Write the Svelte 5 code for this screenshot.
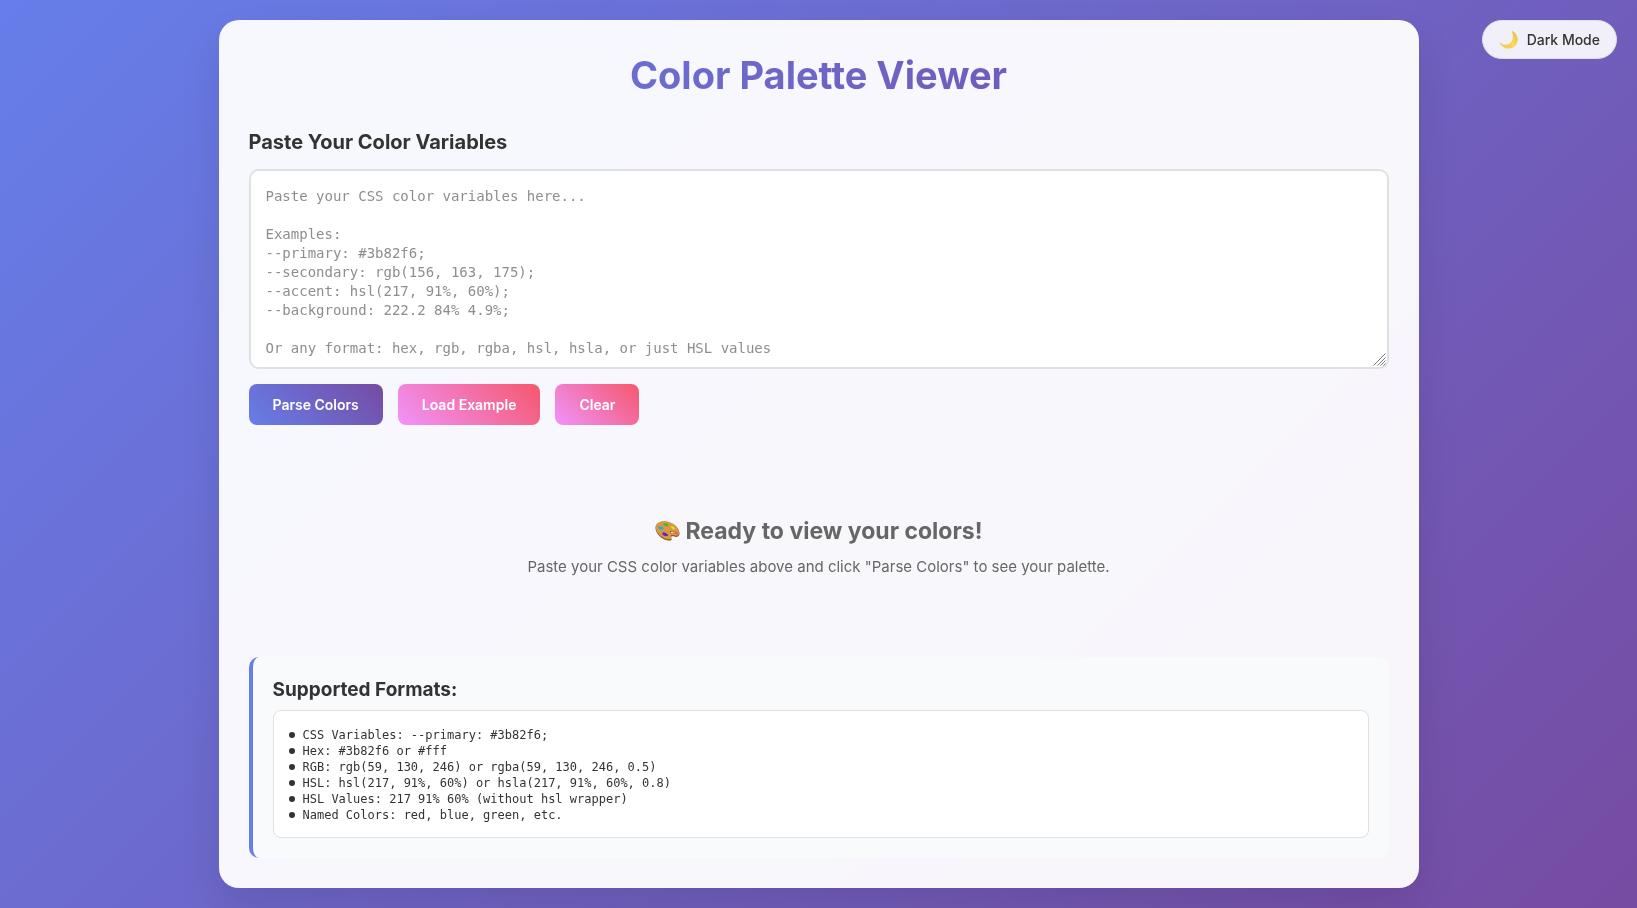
<script lang="ts">
  type Swatch = { name: string; value: string };

  const placeholder = `Paste your CSS color variables here...

Examples:
--primary: #3b82f6;
--secondary: rgb(156, 163, 175);
--accent: hsl(217, 91%, 60%);
--background: 222.2 84% 4.9%;

Or any format: hex, rgb, rgba, hsl, hsla, or just HSL values`;

  const example = `--primary: #3b82f6;
--secondary: rgb(156, 163, 175);
--accent: hsl(217, 91%, 60%);
--background: 222.2 84% 4.9%;`;

  const formats = [
    'CSS Variables: --primary: #3b82f6;',
    'Hex: #3b82f6 or #fff',
    'RGB: rgb(59, 130, 246) or rgba(59, 130, 246, 0.5)',
    'HSL: hsl(217, 91%, 60%) or hsla(217, 91%, 60%, 0.8)',
    'HSL Values: 217 91% 60% (without hsl wrapper)',
    'Named Colors: red, blue, green, etc.'
  ];

  let input = $state('');
  let dark = $state(false);
  let colors = $state<Swatch[]>([]);

  function parseColors() {
    colors = input
      .split(/[;\n]/)
      .map((line) => line.trim())
      .filter(Boolean)
      .map((line) => {
        const [, name, raw] = line.match(/^(?:(--[\w-]+)\s*:)?\s*(.+)$/) ?? [];
        // bare HSL values need the wrapper
        const value = /^[\d.]+\s+[\d.]+%\s+[\d.]+%$/.test(raw) ? `hsl(${raw})` : raw;
        return { name: name ?? raw, value };
      })
      .filter((c) => CSS.supports('color', c.value));
  }

  function loadExample() {
    input = example;
    parseColors();
  }

  function clear() {
    input = '';
    colors = [];
  }
</script>

<div class="page" class:dark>
  <button class="toggle" onclick={() => (dark = !dark)}>
    <svg width="19" height="19" viewBox="0 0 20 20" aria-hidden="true">
      <defs>
        <linearGradient id="moon" x1="0" y1="1" x2="1" y2="0">
          <stop offset="0" stop-color="#f6c544" />
          <stop offset="0.5" stop-color="#fbd75c" />
          <stop offset="1" stop-color="#e9b93c" />
        </linearGradient>
      </defs>
      <path
        d="M13.2.6C17 2.2 19.7 5.8 19.7 10c0 5.400-4.300 9.600-9.700 9.600-4.400 0-8.300-2.900-9.600-7 1.800 2.200 4.300 3.200 6.900 2.900 4.200-.4 7.300-3.900 7.300-8.100 0-2.500-.4-4.500-1.400-6.800z"
        fill="url(#moon)"
      />
    </svg>
    <span>{dark ? 'Light Mode' : 'Dark Mode'}</span>
  </button>

  <main class="container">
    <h1>Color Palette Viewer</h1>

    <section class="input-section">
      <h2><label for="colors">Paste Your Color Variables</label></h2>
      <textarea id="colors" bind:value={input} {placeholder} spellcheck="false"></textarea>
      <div class="buttons">
        <button class="btn" onclick={parseColors}>Parse Colors</button>
        <button class="btn secondary" onclick={loadExample}>Load Example</button>
        <button class="btn secondary" onclick={clear}>Clear</button>
      </div>
    </section>

    {#if colors.length}
      <section class="palette">
        {#each colors as c}
          <div class="swatch">
            <div class="chip" style="background: {c.value}"></div>
            <strong>{c.name}</strong>
            <code>{c.value}</code>
          </div>
        {/each}
      </section>
    {:else}
      <section class="empty">
        <h3>
          <svg width="25" height="20" viewBox="0 0 25 20" aria-hidden="true">
            <path
              d="M1 4.500C2.600.8 8.500-.3 14 1.400c5.800 1.700 10.300 6.300 10.500 10.700.1 2.500-1.300 4-3.300 3.800-1.800-.1-3.400-1.100-4.600-.5-1.300.8.700 2.300-.2 3.500-1 1.300-5.200.7-8.800-1.500C2.500 14.400-.8 8.600 1 4.500z"
              fill="#8a571d"
            />
            <path
              d="M1.200 4C2.900.5 8.500-.5 14 1.100c5.600 1.700 9.900 6 10.100 10.200.1 2.200-1.100 3.600-2.900 3.400-1.900-.2-3.500-1.300-4.900-.5-1.500 1 .4 2.600-.4 3.600-.9 1.100-4.800.5-8.200-1.500C2.700 13.500-.5 8 1.200 4z"
              fill="#d69a43"
            />
            <ellipse cx="16.700" cy="11" rx="1.900" ry="1.200" fill="#7c5124" />
            <ellipse cx="17" cy="11.300" rx="1.400" ry=".8" fill="#f8f8fd" />
            <path d="M8.500 3c1-1.300 4.500-.8 4.700.9.200 1.500-1.700 1.600-2.700.9C9.600 4.300 7.800 4.200 8.500 3z" fill="#48b52b" />
            <path d="M3.500 5.800c.9-1.100 2.300.1 3.600.1 1.400.2 1.800 1.900.5 2.600-1.600.8-5-.9-4.100-2.700z" fill="#1fa8e5" />
            <path d="M7.300 12c.7-1.400 2.700-.8 3.700.2 1 .9 2.700 1.200 2.100 2.300-.8 1.500-6.800.2-5.800-2.500z" fill="#7520c5" />
            <path d="M16 5.600c.7-1.200 3.900.4 3.900 1.900 0 1.300-1.700 1-2.400.3-.7-.6-2.100-1.100-1.500-2.200z" fill="#f3d72f" />
            <path d="M19.700 10.900c.6-1.200 3.300.1 3.500 1.500.1 1.200-1.500 1.300-2.200.7-.7-.5-1.800-1.200-1.300-2.200z" fill="#f25a59" />
          </svg>
          Ready to view your colors!
        </h3>
        <p>Paste your CSS color variables above and click "Parse Colors" to see your palette.</p>
      </section>
    {/if}

    <section class="formats">
      <h4>Supported Formats:</h4>
      <ul>
        {#each formats as format}
          <li>{format}</li>
        {/each}
      </ul>
    </section>
  </main>
</div>

<style>
  :global(body) {
    margin: 0;
  }

  .page {
    --card: rgba(255, 255, 255, 0.95);
    --panel: #f8fafc;
    --field: #fff;
    --line: #e0e0e0;
    --text: #333;
    --muted: #666;
    box-sizing: border-box;
    min-height: 100vh;
    padding: 20px;
    background: linear-gradient(135deg, #667eea 0%, #764ba2 100%);
    color: var(--text);
    font-family: Inter, 'Liberation Sans', sans-serif;
    font-size: 15px;
  }

  .page.dark {
    --card: rgba(30, 30, 46, 0.95);
    --panel: #262638;
    --field: #1b1b2a;
    --line: #44445a;
    --text: #eee;
    --muted: #aaa;
  }

  h1, h2, h3, h4, p, ul {
    margin: 0;
    padding: 0;
  }

  button {
    font-family: inherit;
    cursor: pointer;
  }

  /* floats above the page while it scrolls */
  .toggle {
    position: fixed;
    top: 20px;
    right: 20px;
    display: flex;
    align-items: center;
    gap: 9px;
    padding: 9px 16px;
    border: 1px solid var(--line);
    border-radius: 50px;
    background: rgba(255, 255, 255, 0.9);
    color: #333;
    font-size: 14px;
    font-weight: 500;
    line-height: 18px;
  }

  .container {
    box-sizing: border-box;
    max-width: 1200px;
    margin: 0 auto;
    padding: 30px;
    border-radius: 20px;
    background: var(--card);
    box-shadow: 0 20px 40px rgba(0, 0, 0, 0.1);
  }

  h1 {
    margin-bottom: 28px;
    background: linear-gradient(135deg, #667eea, #764ba2);
    background-clip: text;
    -webkit-background-clip: text;
    color: transparent;
    font-size: 38px;
    line-height: 50px;
    text-align: center;
  }

  .input-section {
    margin-bottom: 30px;
  }

  h2 {
    margin-bottom: 13px;
    font-size: 20px;
    line-height: 28px;
  }

  textarea {
    display: block;
    box-sizing: border-box;
    width: 100%;
    height: 200px;
    padding: 16px 15px 14px;
    border: 2px solid var(--line);
    border-radius: 10px;
    background: var(--field);
    color: var(--text);
    font-family: 'DejaVu Sans Mono', monospace;
    font-size: 14px;
    line-height: 19px;
    resize: vertical;
  }

  textarea::placeholder {
    color: #8e8e8e;
  }

  textarea::-webkit-resizer {
    background: url("data:image/svg+xml,%3Csvg xmlns='http://www.w3.org/2000/svg' width='15' height='15'%3E%3Cpath d='M1.500 13.500l12-12M5.500 13.500l8-8M8.500 13.500l5-5M11.500 13.500l2-2' stroke='%23777'/%3E%3C/svg%3E") right bottom no-repeat;
  }

  .buttons {
    display: flex;
    flex-wrap: wrap;
    gap: 15px;
    margin-top: 15px;
  }

  .btn {
    padding: 12px 24px;
    border: none;
    border-radius: 8px;
    background: linear-gradient(45deg, #667eea, #764ba2);
    color: #fff;
    font-size: 14px;
    font-weight: 600;
    line-height: 17px;
  }

  .btn.secondary {
    background: linear-gradient(45deg, #f093fb, #f5576c);
  }

  .empty {
    margin-bottom: 20px;
    padding: 60px 20px;
    color: var(--muted);
    text-align: center;
  }

  h3 {
    display: flex;
    align-items: center;
    justify-content: center;
    gap: 6px;
    margin-bottom: 10px;
    font-size: 23px;
    line-height: 32px;
  }

  .empty p {
    line-height: 20px;
  }

  .palette {
    display: grid;
    grid-template-columns: repeat(auto-fill, minmax(200px, 1fr));
    gap: 20px;
    margin-bottom: 30px;
  }

  .swatch {
    display: flex;
    flex-direction: column;
    gap: 5px;
  }

  .chip {
    height: 100px;
    border: 1px solid var(--line);
    border-radius: 10px;
  }

  .formats {
    padding: 20px;
    border-left: 4px solid #667eea;
    border-radius: 10px;
    background: var(--panel);
  }

  h4 {
    margin-bottom: 8px;
    font-size: 19px;
    line-height: 25px;
  }

  ul {
    padding: 16px 15px 14px;
    border: 1px solid var(--line);
    border-radius: 8px;
    background: var(--field);
    font-family: 'DejaVu Sans Mono', monospace;
    font-size: 12px;
    line-height: 16px;
    list-style: none;
  }

  li {
    display: flex;
    align-items: center;
    gap: 8px;
  }

  li::before {
    content: '';
    width: 6px;
    height: 6px;
    border-radius: 50%;
    background: currentColor;
  }
</style>
